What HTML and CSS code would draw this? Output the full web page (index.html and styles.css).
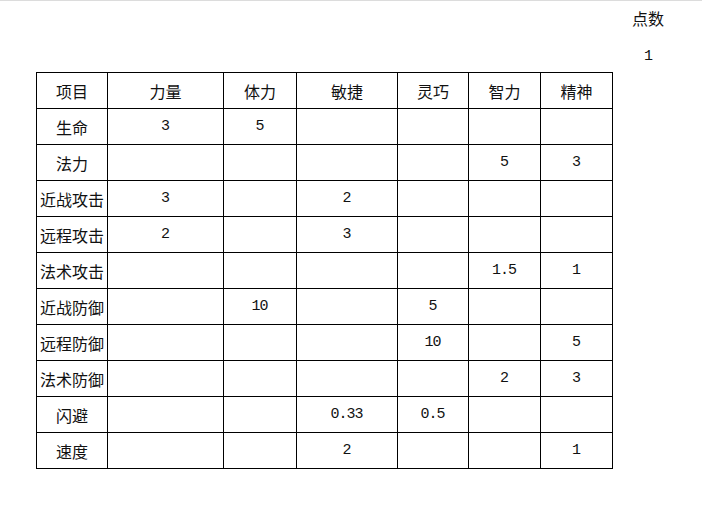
FILE: index.html
```html
<!DOCTYPE html>
<html lang="zh">
<head>
<meta charset="utf-8">
<title>属性表</title>
<link rel="stylesheet" href="styles.css">
</head>
<body>
<div class="page">
  <div class="points">
    <div class="points-label">点数</div>
    <div class="points-value num">1</div>
  </div>
  <table class="stats">
    <colgroup>
      <col class="c1"><col class="c2"><col class="c3"><col class="c4"><col class="c5"><col class="c6"><col class="c7">
    </colgroup>
    <tr><td>项目</td><td>力量</td><td>体力</td><td>敏捷</td><td>灵巧</td><td>智力</td><td>精神</td></tr>
    <tr><td>生命</td><td class="num">3</td><td class="num">5</td><td></td><td></td><td></td><td></td></tr>
    <tr><td>法力</td><td></td><td></td><td></td><td></td><td class="num">5</td><td class="num">3</td></tr>
    <tr><td>近战攻击</td><td class="num">3</td><td></td><td class="num">2</td><td></td><td></td><td></td></tr>
    <tr><td>远程攻击</td><td class="num">2</td><td></td><td class="num">3</td><td></td><td></td><td></td></tr>
    <tr><td>法术攻击</td><td></td><td></td><td></td><td></td><td class="num">1.5</td><td class="num">1</td></tr>
    <tr><td>近战防御</td><td></td><td class="num">10</td><td></td><td class="num">5</td><td></td><td></td></tr>
    <tr><td>远程防御</td><td></td><td></td><td></td><td class="num">10</td><td></td><td class="num">5</td></tr>
    <tr><td>法术防御</td><td></td><td></td><td></td><td></td><td class="num">2</td><td class="num">3</td></tr>
    <tr><td>闪避</td><td></td><td></td><td class="num">0.33</td><td class="num">0.5</td><td></td><td></td></tr>
    <tr><td>速度</td><td></td><td></td><td class="num">2</td><td></td><td></td><td class="num">1</td></tr>
  </table>
</div>
</body>
</html>
```

FILE: styles.css
```css
html, body {
  margin: 0;
  padding: 0;
  background: #ffffff;
}

body {
  width: 702px;
  height: 510px;
  overflow: hidden;
  border-top: 1px solid #dcdcdc;
  box-sizing: border-box;
  font-family: "Noto Sans CJK SC", "DejaVu Sans", sans-serif;
  color: #111;
}

.page {
  display: flex;
  flex-direction: column;
}

.points {
  align-self: flex-end;
  width: 60px;
  margin-right: 24px;
  text-align: center;
  padding-top: 6px;
}

.points-label {
  font-size: 16px;
  line-height: 22px;
}

.points-value {
  margin-top: 17px;
  line-height: 22px;
}

.num {
  font-family: "Liberation Mono", monospace;
  font-size: 15px;
  letter-spacing: -1px;
}

.stats {
  margin-top: 4px;
  margin-left: 36px;
  border-collapse: collapse;
  table-layout: fixed;
  width: 577px;
}

.c1 { width: 71px; }
.c2 { width: 116px; }
.c3 { width: 73px; }
.c4 { width: 101px; }
.c5 { width: 71px; }
.c6 { width: 72px; }
.c7 { width: 72px; }

.stats td {
  border: 1px solid #000;
  height: 35px;
  padding: 0;
  text-align: center;
  vertical-align: middle;
  font-size: 16px;
  line-height: 20px;
  white-space: nowrap;
}

.stats td.num {
  font-size: 15px;
  text-indent: -1px;
}
```
